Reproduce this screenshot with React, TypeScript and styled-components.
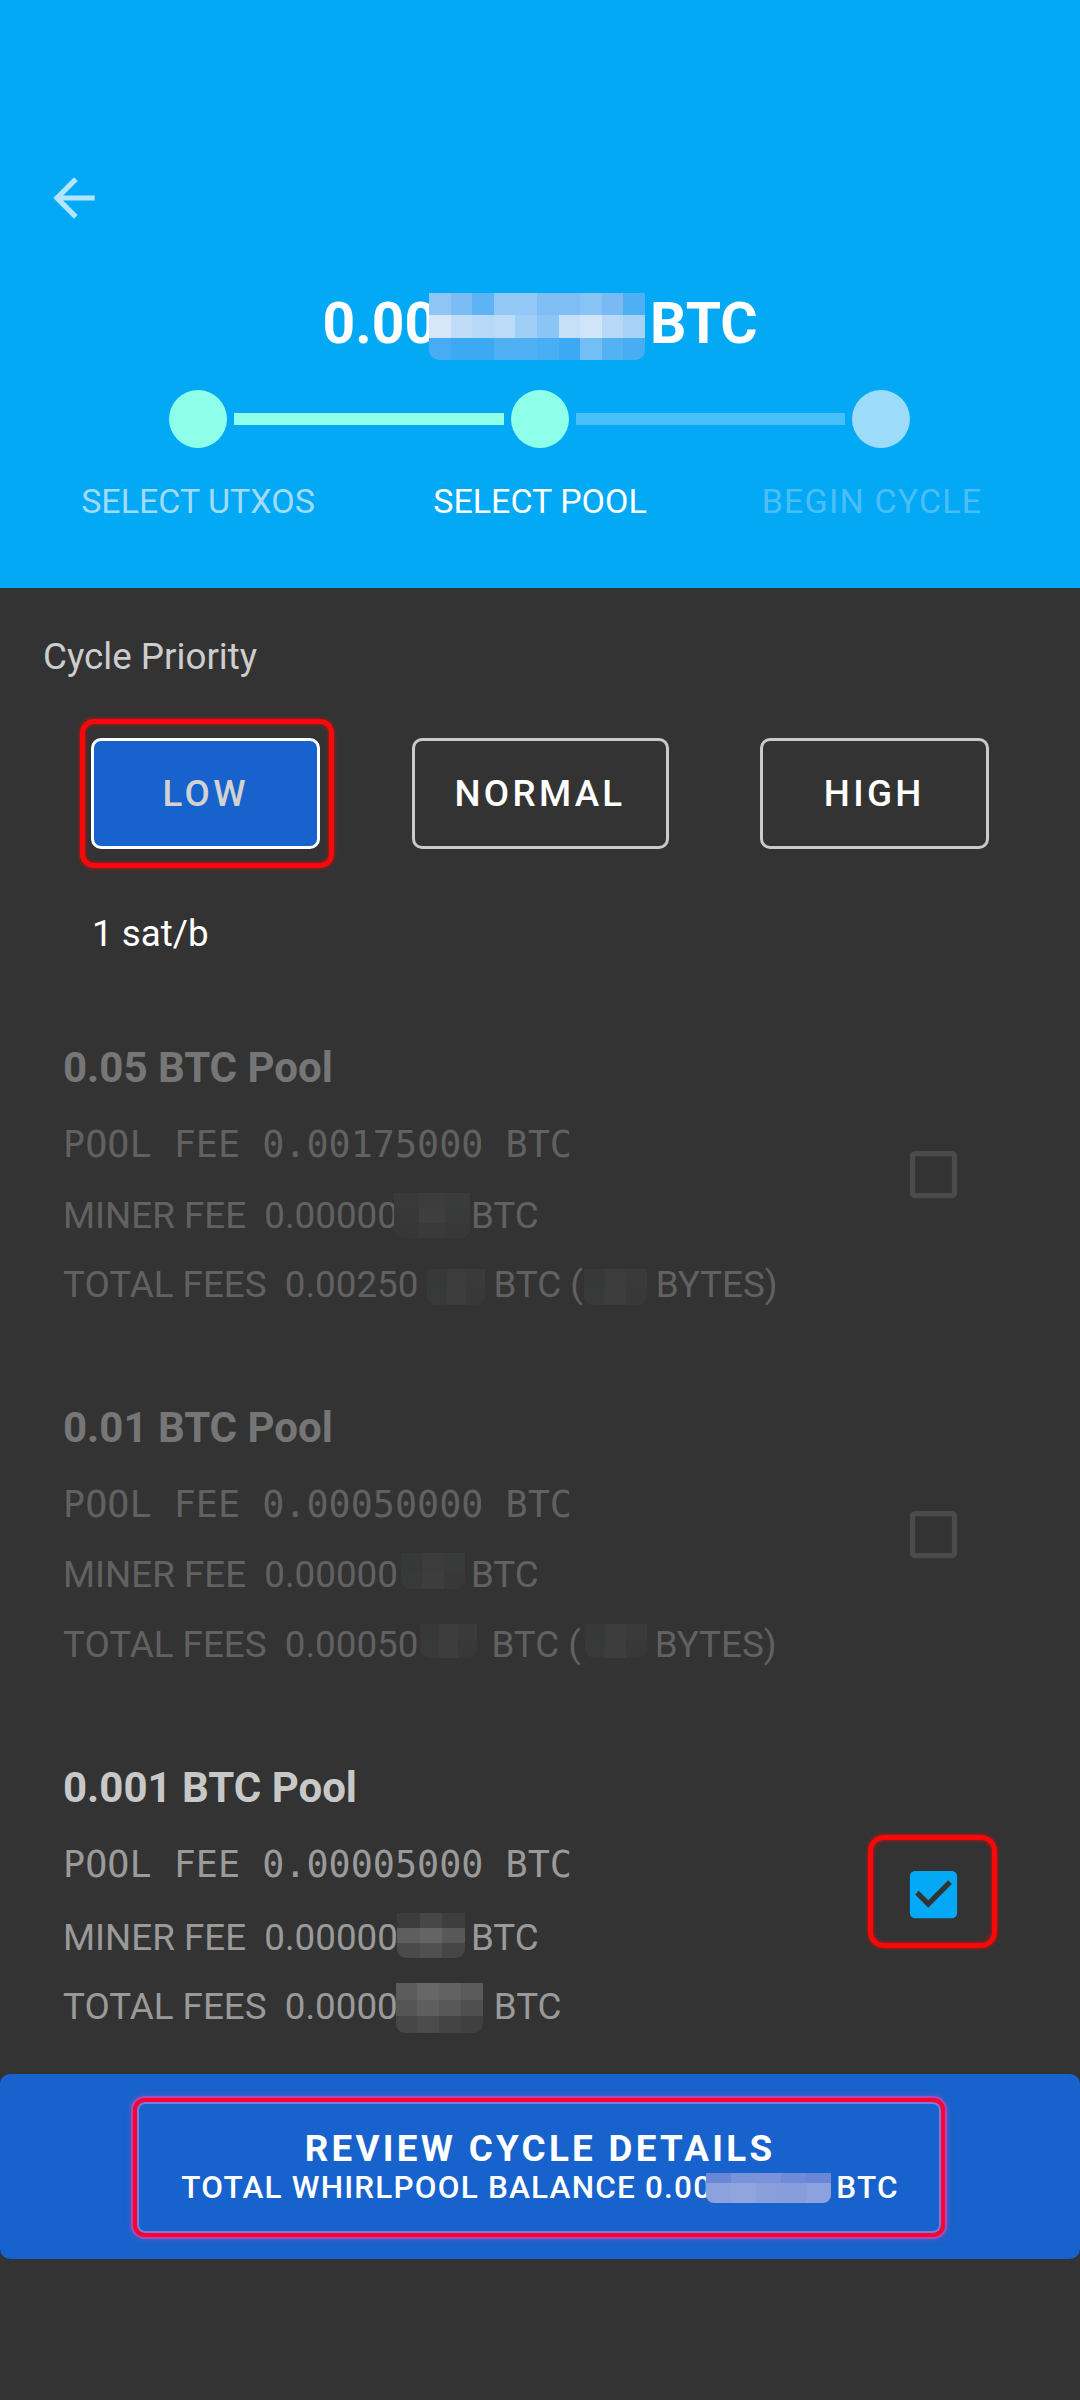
import React from "react";
import styled, { createGlobalStyle, css } from "styled-components";

const GlobalStyle = createGlobalStyle`
  html, body { margin: 0; padding: 0; background: #333333; }
  body {
    font-family: Roboto, "Noto Sans", "Liberation Sans", sans-serif;
    -webkit-font-smoothing: antialiased;
  }
  * { box-sizing: border-box; }
`;

const redFrame = css`
  content: "";
  position: absolute;
  pointer-events: none;
  border: 5px solid #f80808;
  box-shadow: 0 0 3px 1px rgba(255, 0, 0, 0.55), inset 0 0 3px 1px rgba(255, 0, 0, 0.55);
`;

const Screen = styled.div`
  width: 1080px;
  min-height: 2400px;
  background: #333333;
  display: flex;
  flex-direction: column;
`;

/* ---------- header ---------- */

const Header = styled.header`
  height: 588px;
  background: #03a9f4;
  display: flex;
  flex-direction: column;
  padding-top: 167px;
`;

const BackButton = styled.button`
  width: 62px;
  height: 62px;
  margin-left: 43px;
  padding: 0;
  border: none;
  background: none;
  color: rgba(255, 255, 255, 0.7);
  display: flex;
  svg {
    width: 62px;
    height: 62px;
  }
`;

const Amount = styled.div`
  margin-top: 61px;
  height: 68px;
  line-height: 68px;
  font-size: 57px;
  font-weight: 700;
  color: #ffffff;
  text-align: center;
  white-space: pre;
`;

const Stepper = styled.div`
  margin-top: 32px;
  height: 58px;
  padding: 0 170px 0 169px;
  display: flex;
  align-items: center;
  gap: 7px;
`;

const StepDot = styled.div<{ $color: string }>`
  width: 58px;
  height: 58px;
  flex: none;
  border-radius: 50%;
  background: ${(p) => p.$color};
`;

const StepLine = styled.div<{ $color: string }>`
  flex: 1;
  height: 12px;
  background: ${(p) => p.$color};
`;

const StepLabels = styled.div`
  margin-top: 33px;
  padding: 0 27px;
  display: grid;
  grid-template-columns: repeat(3, 342px);
`;

const StepLabel = styled.div<{ $color: string; $shift?: number; $spacing?: number }>`
  text-align: center;
  font-size: 34px;
  line-height: 40px;
  color: ${(p) => p.$color};
  letter-spacing: ${(p) => p.$spacing ?? 0}px;
  padding-right: ${(p) => (p.$shift ? p.$shift * 2 : 0)}px;
`;

/* ---------- priority ---------- */

const SectionLabel = styled.div`
  margin-top: 47px;
  padding-left: 43px;
  font-size: 36.75px;
  line-height: 43px;
  color: #cdcdcd;
`;

const PriorityRow = styled.div`
  margin-top: 60px;
  display: flex;
  justify-content: space-evenly;
`;

const PriorityButton = styled.button<{ $active?: boolean; $marked?: boolean }>`
  position: relative;
  height: 111px;
  min-width: 229px;
  padding: 0 40px;
  border-radius: 10px;
  border: 3px solid ${(p) => (p.$active ? "#ffffff" : "#c9c9cf")};
  background: ${(p) => (p.$active ? "#1762cc" : "transparent")};
  color: ${(p) => (p.$active ? "#d2d2d2" : "#ffffff")};
  font-family: Roboto, sans-serif;
  font-size: 36.75px;
  font-weight: 500;
  letter-spacing: 3.3px;
  ${(p) =>
    p.$marked &&
    css`
      &::after {
        ${redFrame};
        top: -22px;
        bottom: -22px;
        left: -14px;
        right: -17px;
        border-radius: 14px;
      }
    `}
`;

const FeeRate = styled.div`
  margin-top: 63px;
  padding-left: 92px;
  font-size: 36.75px;
  line-height: 43px;
  color: #ffffff;
`;

/* ---------- pools ---------- */

const PoolList = styled.div`
  margin-top: 40px;
  display: flex;
  flex-direction: column;
`;

const PoolItem = styled.div<{ $disabled?: boolean }>`
  height: 358px;
  padding: 48px 84px 47px 63px;
  display: flex;
  align-items: center;
  opacity: ${(p) => (p.$disabled ? 0.45 : 1)};
`;

const PoolInfo = styled.div`
  flex: 1;
  align-self: flex-start;
  display: flex;
  flex-direction: column;
`;

const PoolTitle = styled.div`
  font-size: 42px;
  line-height: 49px;
  font-weight: 700;
  color: #c8c8c8;
`;

const FeeRows = styled.div`
  margin-top: 31px;
  display: flex;
  flex-direction: column;
  gap: 27px;
`;

const FeeRow = styled.div<{ $mono?: boolean }>`
  font-family: ${(p) => (p.$mono ? '"DejaVu Sans Mono", "Liberation Mono", monospace' : "Roboto, sans-serif")};
  font-size: 36.75px;
  line-height: 43px;
  height: 43px;
  color: #9a9a9a;
  white-space: pre;
`;

const Divider = styled.div`
  height: 2px;
  margin: 0 21px;
  background: #2e353d;
`;

const CheckTarget = styled.div<{ $marked?: boolean }>`
  position: relative;
  width: 126px;
  height: 110px;
  flex: none;
  display: flex;
  align-items: center;
  justify-content: center;
  ${(p) =>
    p.$marked &&
    css`
      &::after {
        ${redFrame};
        top: -5px;
        bottom: 2px;
        left: -2px;
        right: -1px;
        border-radius: 16px;
      }
    `}
`;

const CheckIcon = styled.svg<{ $checked?: boolean }>`
  width: 63px;
  height: 63px;
  fill: ${(p) => (p.$checked ? "#03a9f4" : "#686868")};
`;

/* ---------- pixelated mask ---------- */

const MaskBox = styled.span<{ $w: number; $h: number; $va: number; $ml: number; $mr: number; $radius: string }>`
  display: inline-block;
  overflow: hidden;
  width: ${(p) => p.$w}px;
  height: ${(p) => p.$h}px;
  vertical-align: ${(p) => p.$va}px;
  margin-left: ${(p) => p.$ml}px;
  margin-right: ${(p) => p.$mr}px;
  border-radius: ${(p) => p.$radius};
`;

const MaskGrid = styled.span<{ $cols: number; $rows: string }>`
  display: grid;
  width: 100%;
  height: 100%;
  grid-template-columns: repeat(${(p) => p.$cols}, 1fr);
  grid-template-rows: ${(p) => p.$rows};
`;

const Tile = styled.span<{ $c: string }>`
  background: ${(p) => p.$c};
`;

type MaskProps = {
  w: number;
  h: number;
  va: number;
  ml?: number;
  mr?: number;
  tiles: string[][];
  rows?: string;
  radius?: string;
};

function Mask({ w, h, va, ml = 0, mr = 0, tiles, rows, radius = "0 0 9px 9px" }: MaskProps) {
  const cols = tiles[0].length;
  return (
    <MaskBox $w={w} $h={h} $va={va} $ml={ml} $mr={mr} $radius={radius}>
      <MaskGrid $cols={cols} $rows={rows ?? `repeat(${tiles.length}, 1fr)`}>
        {tiles.flatMap((r, i) => r.map((c, j) => <Tile key={`${i}-${j}`} $c={c} />))}
      </MaskGrid>
    </MaskBox>
  );
}

const dimTiles = [
  ["#414242", "#474848", "#444545"],
  ["#3f4040", "#4b4c4c", "#424343"],
  ["#3d3e3e", "#434444", "#3f4040"],
];

const dimTiles2 = [
  ["#3e3f3f", "#484949", "#424343"],
  ["#404141", "#4a4b4b", "#3f4040"],
];

const litMiner = [
  ["#3c3c3c", "#474747", "#3e3e3e"],
  ["#5e5e5e", "#646464", "#585858"],
  ["#4a4a4a", "#505050", "#454545"],
];

const litTotal = [
  ["#5c5c5c", "#666666", "#626262", "#5a5a5a"],
  ["#555555", "#5e5e5e", "#585858", "#4f4f4f"],
  ["#474747", "#4b4b4b", "#444444", "#404040"],
];

/* ---------- bottom bar ---------- */

const BottomBar = styled.div`
  margin-top: 1px;
  height: 185px;
  border-radius: 10px;
  background: #1762cc;
  display: flex;
  align-items: center;
  justify-content: center;
`;

const ReviewButton = styled.button`
  position: relative;
  width: 808px;
  height: 138px;
  border: none;
  border-radius: 10px;
  background: transparent;
  display: flex;
  flex-direction: column;
  align-items: center;
  justify-content: center;
  color: #ffffff;
  font-family: Roboto, sans-serif;
  &::after {
    content: "";
    position: absolute;
    pointer-events: none;
    top: 0;
    bottom: -1px;
    left: -3px;
    right: -1px;
    border: 4px solid #ff0033;
    border-radius: 12px;
    box-shadow: 0 0 0 2px rgba(205, 70, 170, 0.75), 0 0 5px 3px rgba(200, 80, 180, 0.35),
      inset 0 0 0 2px rgba(190, 140, 230, 0.6);
  }
`;

const ReviewTitle = styled.div`
  font-size: 36.75px;
  line-height: 40px;
  font-weight: 700;
  letter-spacing: 3.3px;
`;

const ReviewSub = styled.div`
  margin-top: 2px;
  font-size: 31.5px;
  line-height: 34px;
  font-weight: 500;
  letter-spacing: 1.2px;
  white-space: pre;
`;

/* ---------- data ---------- */

type Pool = {
  title: string;
  poolFee: string;
  disabled: boolean;
  checked: boolean;
  miner: React.ReactNode;
  total: React.ReactNode;
};

const pools: Pool[] = [
  {
    title: "0.05 BTC Pool",
    poolFee: "POOL FEE 0.00175000 BTC",
    disabled: true,
    checked: false,
    miner: (
      <>
        {"MINER FEE  0.00000"}
        <Mask w={76} h={45} va={-10} ml={-4} mr={1} tiles={dimTiles} />
        {"BTC"}
      </>
    ),
    total: (
      <>
        {"TOTAL FEES  0.00250"}
        <Mask w={58} h={36} va={-8} ml={9} mr={8} tiles={dimTiles2} />
        {"BTC ("}
        <Mask w={63} h={36} va={-8} ml={1} mr={9} tiles={dimTiles2} />
        {"BYTES)"}
      </>
    ),
  },
  {
    title: "0.01 BTC Pool",
    poolFee: "POOL FEE 0.00050000 BTC",
    disabled: true,
    checked: false,
    miner: (
      <>
        {"MINER FEE  0.00000"}
        <Mask w={64} h={36} va={-2} ml={3} mr={6} tiles={dimTiles2} />
        {"BTC"}
      </>
    ),
    total: (
      <>
        {"TOTAL FEES  0.00050"}
        <Mask w={57} h={34} va={-1} ml={2} mr={14} tiles={dimTiles2} />
        {"BTC ("}
        <Mask w={62} h={34} va={-1} ml={4} mr={8} tiles={dimTiles2} />
        {"BYTES)"}
      </>
    ),
  },
  {
    title: "0.001 BTC Pool",
    poolFee: "POOL FEE 0.00005000 BTC",
    disabled: false,
    checked: true,
    miner: (
      <>
        {"MINER FEE  0.00000"}
        <Mask w={68} h={45} va={-8} ml={-1} mr={6} tiles={litMiner} />
        {"BTC"}
      </>
    ),
    total: (
      <>
        {"TOTAL FEES  0.0000"}
        <Mask w={87} h={50} va={-14} ml={-2} mr={11} tiles={litTotal} />
        {"BTC"}
      </>
    ),
  },
];

const amountTiles = [
  ["#8fc5f5", "#7cbcf5", "#5db3f4", "#93c7f5", "#93c7f5", "#7fbdf5", "#7fbdf5", "#89c3f5", "#79baf5", "#4eb0f4"],
  ["#d5e7f8", "#c0ddf7", "#b7d9f7", "#bbdbf7", "#9fcef6", "#8bc5f6", "#c5e0f8", "#d1e5f8", "#b7d9f7", "#a7d2f7"],
  ["#47acf3", "#3ca9f3", "#3ba9f4", "#4fb0f4", "#4fb0f4", "#4aaef4", "#3ca9f4", "#72bef5", "#54b1f4", "#49adf4"],
];

const balanceTiles = [
  ["#6a86d6", "#7893da", "#7a93da", "#6f8bd8", "#6a86d6"],
  ["#8ca1dd", "#90a4de", "#899fdc", "#879edc", "#8ca1dd"],
];

/* ---------- icons ---------- */

const ArrowBack = () => (
  <svg viewBox="0 0 24 24" fill="currentColor">
    <path d="M20 11H7.83l5.59-5.59L12 4l-8 8 8 8 1.41-1.41L7.83 13H20v-2z" />
  </svg>
);

const CheckBox = ({ checked }: { checked: boolean }) => (
  <CheckIcon viewBox="0 0 24 24" $checked={checked}>
    {checked ? (
      <path d="M19 3H5c-1.11 0-2 .9-2 2v14c0 1.1.89 2 2 2h14c1.11 0 2-.9 2-2V5c0-1.1-.89-2-2-2zm-9 14l-5-5 1.41-1.41L10 14.17l7.59-7.59L19 8l-9 9z" />
    ) : (
      <path d="M19 5v14H5V5h14m0-2H5c-1.1 0-2 .9-2 2v14c0 1.1.9 2 2 2h14c1.1 0 2-.9 2-2V5c0-1.1-.9-2-2-2z" />
    )}
  </CheckIcon>
);

export default function App() {
  return (
    <>
      <GlobalStyle />
      <Screen>
        <Header>
          <BackButton aria-label="back">
            <ArrowBack />
          </BackButton>
          <Amount>
            {"0.00"}
            <Mask w={216} h={67} va={-17} ml={-8} mr={5} tiles={amountTiles} radius="0 0 10px 10px" />
            {"BTC"}
          </Amount>
          <Stepper>
            <StepDot $color="#8effe9" />
            <StepLine $color="#8effe9" />
            <StepDot $color="#8effe9" />
            <StepLine $color="#47bff8" />
            <StepDot $color="#9ddbfa" />
          </Stepper>
          <StepLabels>
            <StepLabel $color="#a0dcf9">SELECT UTXOS</StepLabel>
            <StepLabel $color="#ffffff">SELECT POOL</StepLabel>
            <StepLabel $color="#4cbef6" $shift={10} $spacing={1.2}>
              BEGIN CYCLE
            </StepLabel>
          </StepLabels>
        </Header>

        <SectionLabel>Cycle Priority</SectionLabel>
        <PriorityRow>
          <PriorityButton $active $marked>
            LOW
          </PriorityButton>
          <PriorityButton>NORMAL</PriorityButton>
          <PriorityButton>HIGH</PriorityButton>
        </PriorityRow>
        <FeeRate>1 sat/b</FeeRate>

        <PoolList>
          {pools.map((p, i) => (
            <React.Fragment key={p.title}>
              <PoolItem $disabled={p.disabled}>
                <PoolInfo>
                  <PoolTitle>{p.title}</PoolTitle>
                  <FeeRows>
                    <FeeRow $mono>{p.poolFee}</FeeRow>
                    <FeeRow>{p.miner}</FeeRow>
                    <FeeRow>{p.total}</FeeRow>
                  </FeeRows>
                </PoolInfo>
                <CheckTarget $marked={p.checked}>
                  <CheckBox checked={p.checked} />
                </CheckTarget>
              </PoolItem>
              {i < pools.length - 1 && <Divider />}
            </React.Fragment>
          ))}
        </PoolList>

        <BottomBar>
          <ReviewButton>
            <ReviewTitle>REVIEW CYCLE DETAILS</ReviewTitle>
            <ReviewSub>
              {"TOTAL WHIRLPOOL BALANCE 0.00"}
              <Mask w={125} h={30} va={-5} ml={-6} mr={5} tiles={balanceTiles} rows="1fr 2fr" radius="0 0 8px 8px" />
              {"BTC"}
            </ReviewSub>
          </ReviewButton>
        </BottomBar>
      </Screen>
    </>
  );
}
